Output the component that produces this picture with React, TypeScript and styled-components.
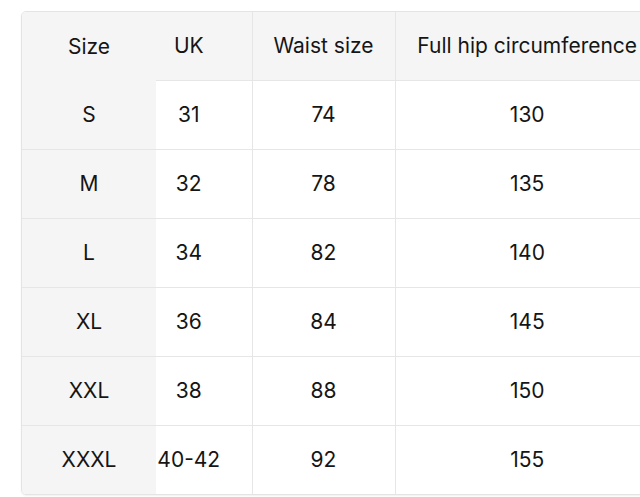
import React from "react";
import styled, { createGlobalStyle } from "styled-components";

const Global = createGlobalStyle`
  html, body { margin: 0; padding: 0; background: #fff; overflow: hidden; }
  body { font-family: Inter, "Liberation Sans", Arial, sans-serif; color: #151515; }
`;

const Page = styled.div`
  padding: 11px 0 0 21px;
  width: 640px;
  height: 497px;
  box-sizing: border-box;
  overflow: hidden;
`;

const Frame = styled.div`
  width: 663px;
  border: 1px solid #e4e4e4;
  border-radius: 5px;
  overflow: hidden;
  box-shadow: 0 1px 2px rgba(0, 0, 0, 0.06);
`;

const Table = styled.table`
  border-collapse: collapse;
  table-layout: fixed;
  width: 663px;
  font-size: 21px;
`;

const HeadCell = styled.th<{ $w: number; $pr?: number; $line?: boolean }>`
  width: ${(p) => p.$w}px;
  height: 68px;
  padding: 0 ${(p) => p.$pr ?? 0}px 0 0;
  background: #f5f5f5;
  font-weight: 400;
  text-align: center;
  white-space: nowrap;
  border-left: ${(p) => (p.$line ? "1px solid #e6e6e6" : "none")};
  box-sizing: border-box;
`;

const SizeCell = styled.td<{ $top: boolean }>`
  height: 69px;
  background: #f5f5f5;
  text-align: center;
  padding: 0;
  border-top: ${(p) => (p.$top ? "1px solid #e6e6e6" : "none")};
  box-sizing: border-box;
`;

const Cell = styled.td<{ $pr?: number; $line?: boolean }>`
  height: 69px;
  background: #fff;
  text-align: center;
  padding: 0 ${(p) => p.$pr ?? 0}px 0 0;
  border-top: 1px solid #e6e6e6;
  border-left: ${(p) => (p.$line ? "1px solid #e6e6e6" : "none")};
  box-sizing: border-box;
  white-space: nowrap;
`;

const rows = [
  ["S", "31", "74", "130"],
  ["M", "32", "78", "135"],
  ["L", "34", "82", "140"],
  ["XL", "36", "84", "145"],
  ["XXL", "38", "88", "150"],
  ["XXXL", "40-42", "92", "155"],
];

export default function App() {
  return (
    <>
      <Global />
      <Page>
        <Frame>
          <Table>
            <thead>
              <tr>
                <HeadCell $w={134}>Size</HeadCell>
                <HeadCell $w={96} $pr={30}>UK</HeadCell>
                <HeadCell $w={143} $line>Waist size</HeadCell>
                <HeadCell $w={290} $line $pr={26}>Full hip circumference</HeadCell>
              </tr>
            </thead>
            <tbody>
              {rows.map((r, i) => (
                <tr key={r[0]}>
                  <SizeCell $top={i > 0}>{r[0]}</SizeCell>
                  <Cell $pr={30}>{r[1]}</Cell>
                  <Cell $line>{r[2]}</Cell>
                  <Cell $line $pr={26}>{r[3]}</Cell>
                </tr>
              ))}
            </tbody>
          </Table>
        </Frame>
      </Page>
    </>
  );
}
